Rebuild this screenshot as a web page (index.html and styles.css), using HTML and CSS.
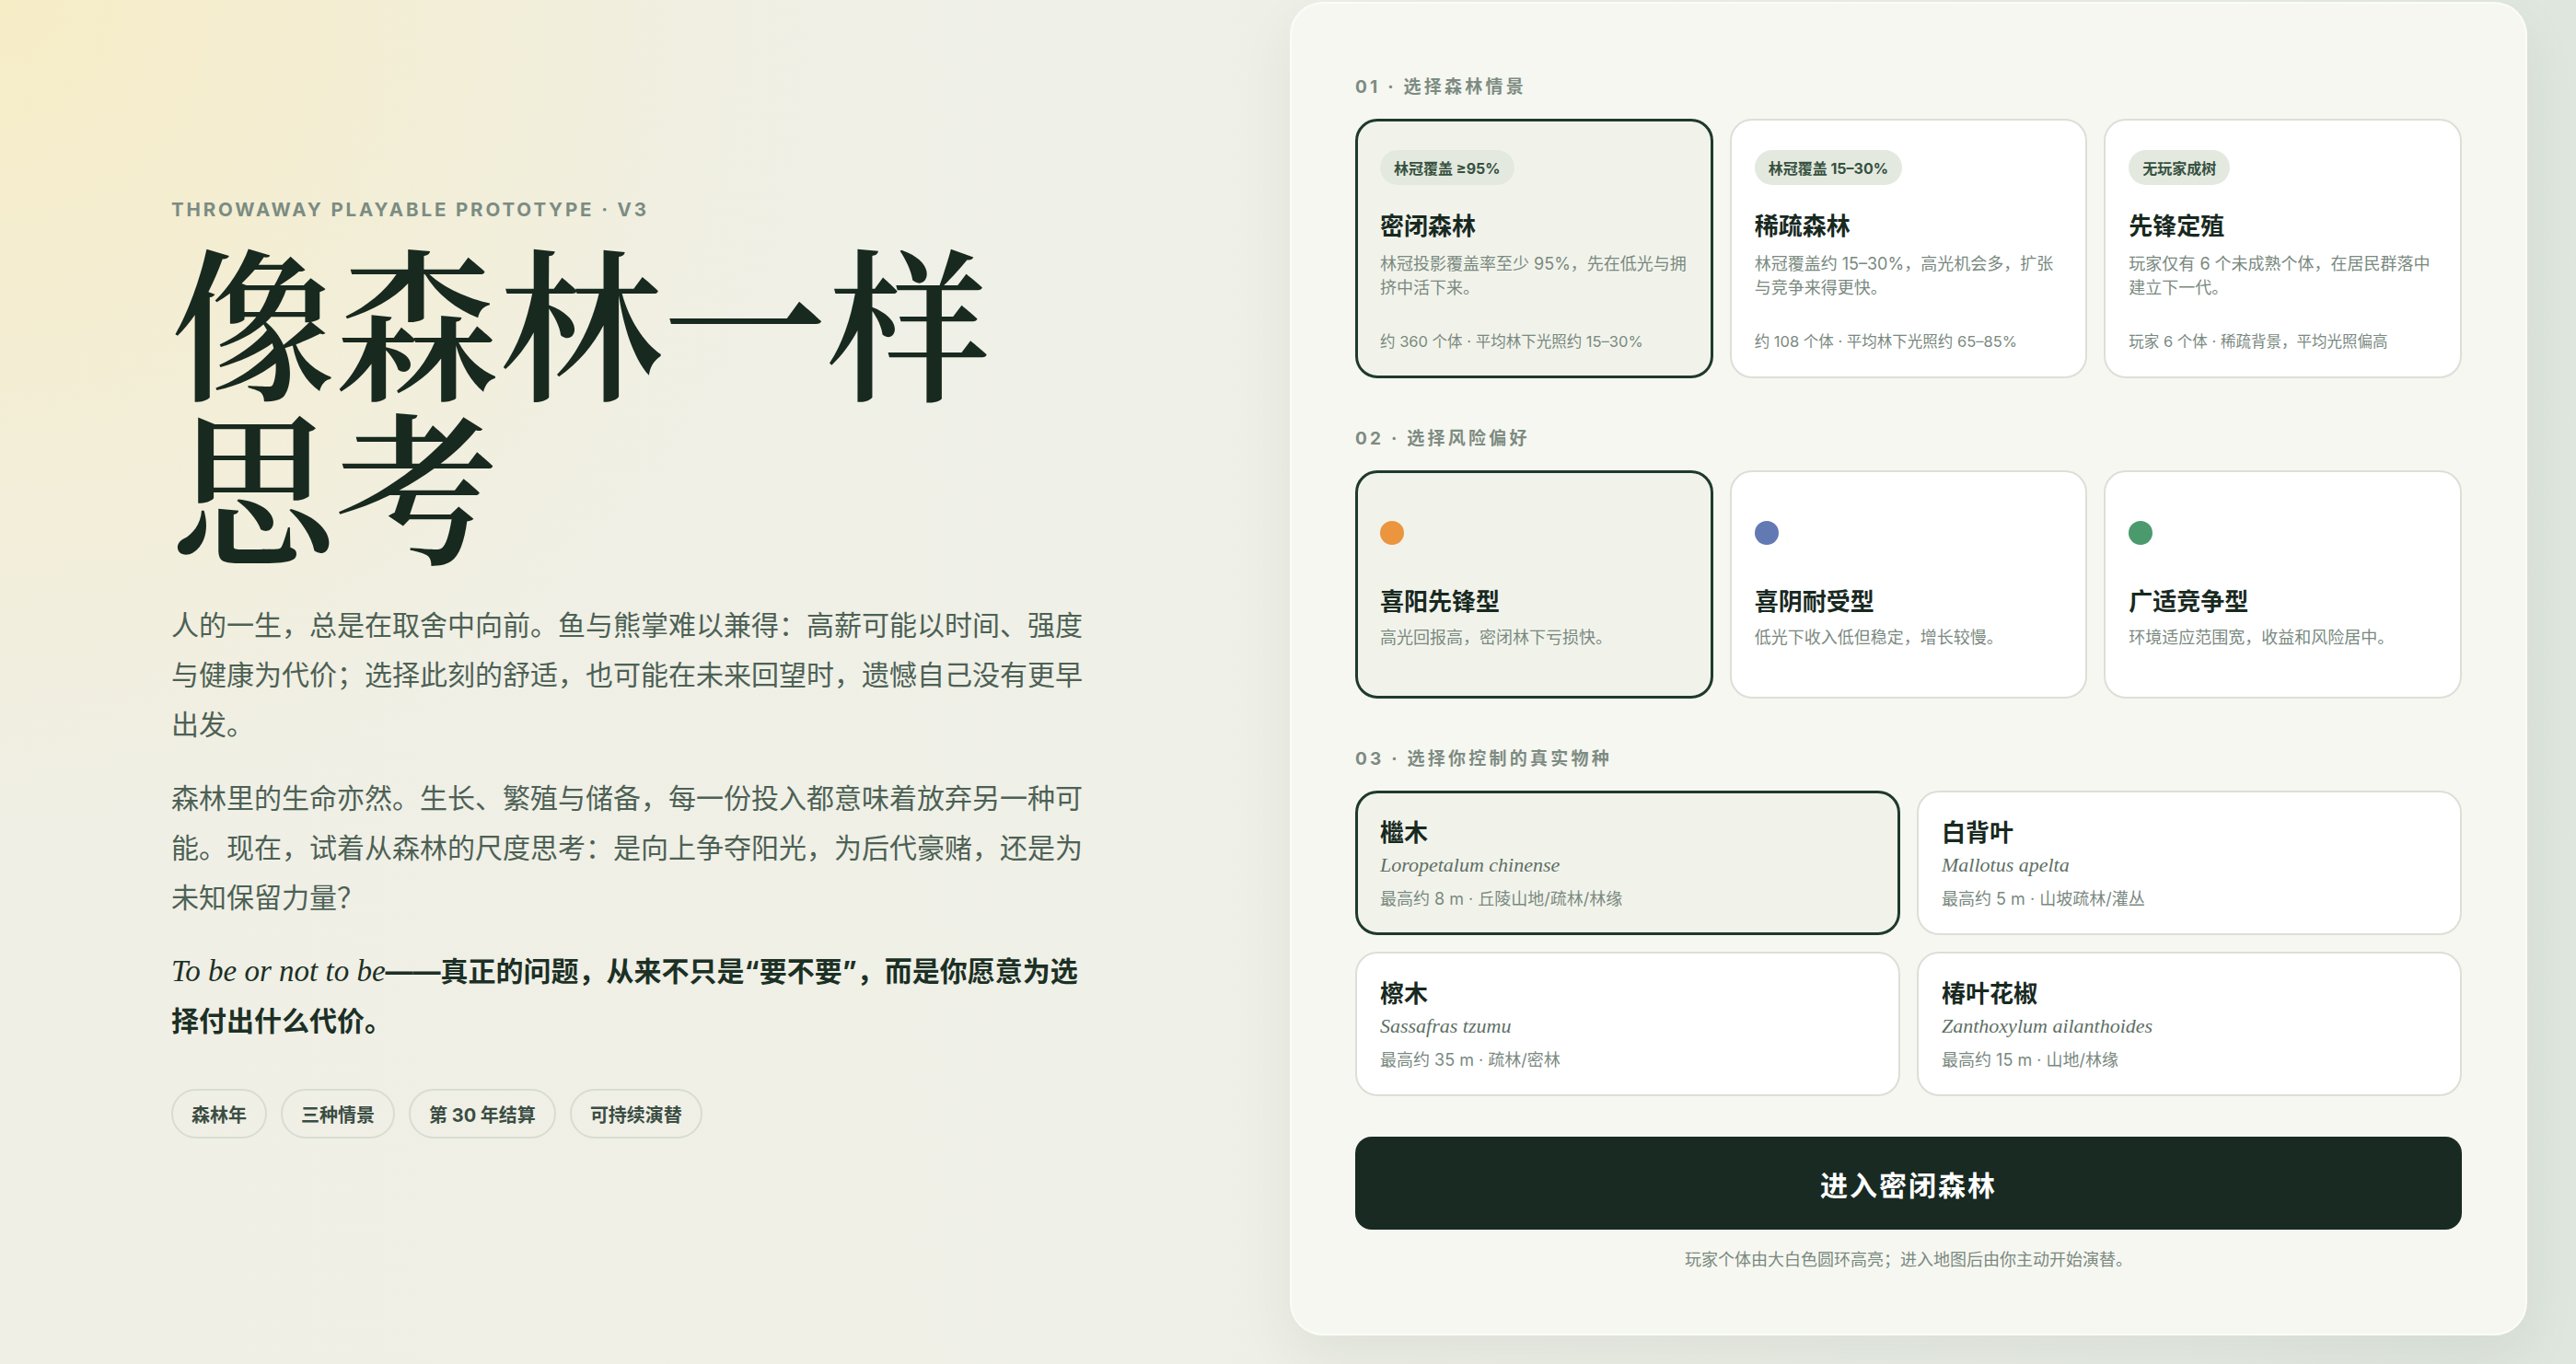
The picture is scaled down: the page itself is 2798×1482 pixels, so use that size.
FILE: index.html
```html
<!DOCTYPE html>
<html lang="zh-CN">
<head>
<meta charset="utf-8">
<title>像森林一样思考</title>
<link rel="stylesheet" href="styles.css">
</head>
<body>
<main class="page">
  <section class="intro">
    <div class="eyebrow">THROWAWAY PLAYABLE PROTOTYPE · V3</div>
    <h1 class="title">像森林一样<br>思考</h1>
    <p class="lead">人的一生，总是在取舍中向前。鱼与熊掌难以兼得：高薪可能以时间、强度与健康为代价；选择此刻的舒适，也可能在未来回望时，遗憾自己没有更早出发。</p>
    <p class="lead">森林里的生命亦然。生长、繁殖与储备，每一份投入都意味着放弃另一种可能。现在，试着从森林的尺度思考：是向上争夺阳光，为后代豪赌，还是为未知保留力量？</p>
    <p class="lead strong"><em>To be or not to be</em>——真正的问题，从来不只是“要不要”，而是你愿意为选择付出什么代价。</p>
    <div class="chips">
      <span class="chip">森林年</span>
      <span class="chip">三种情景</span>
      <span class="chip">第 30 年结算</span>
      <span class="chip">可持续演替</span>
    </div>
  </section>

  <section class="panel">
    <div class="step-label">01 · 选择森林情景</div>
    <div class="grid3">
      <div class="card scene selected">
        <span class="badge">林冠覆盖 ≥95%</span>
        <div class="card-title">密闭森林</div>
        <div class="card-desc">林冠投影覆盖率至少 95%，先在低光与拥挤中活下来。</div>
        <div class="card-foot">约 360 个体 · 平均林下光照约 15–30%</div>
      </div>
      <div class="card scene">
        <span class="badge">林冠覆盖 15–30%</span>
        <div class="card-title">稀疏森林</div>
        <div class="card-desc">林冠覆盖约 15–30%，高光机会多，扩张与竞争来得更快。</div>
        <div class="card-foot">约 108 个体 · 平均林下光照约 65–85%</div>
      </div>
      <div class="card scene">
        <span class="badge">无玩家成树</span>
        <div class="card-title">先锋定殖</div>
        <div class="card-desc">玩家仅有 6 个未成熟个体，在居民群落中建立下一代。</div>
        <div class="card-foot">玩家 6 个体 · 稀疏背景，平均光照偏高</div>
      </div>
    </div>

    <div class="step-label">02 · 选择风险偏好</div>
    <div class="grid3">
      <div class="card risk selected">
        <span class="dot dot-orange"></span>
        <div class="card-title">喜阳先锋型</div>
        <div class="card-desc">高光回报高，密闭林下亏损快。</div>
      </div>
      <div class="card risk">
        <span class="dot dot-blue"></span>
        <div class="card-title">喜阴耐受型</div>
        <div class="card-desc">低光下收入低但稳定，增长较慢。</div>
      </div>
      <div class="card risk">
        <span class="dot dot-green"></span>
        <div class="card-title">广适竞争型</div>
        <div class="card-desc">环境适应范围宽，收益和风险居中。</div>
      </div>
    </div>

    <div class="step-label">03 · 选择你控制的真实物种</div>
    <div class="grid2">
      <div class="card species selected">
        <div class="card-title">檵木</div>
        <div class="latin">Loropetalum chinense</div>
        <div class="card-meta">最高约 8 m · 丘陵山地/疏林/林缘</div>
      </div>
      <div class="card species">
        <div class="card-title">白背叶</div>
        <div class="latin">Mallotus apelta</div>
        <div class="card-meta">最高约 5 m · 山坡疏林/灌丛</div>
      </div>
      <div class="card species">
        <div class="card-title">檫木</div>
        <div class="latin">Sassafras tzumu</div>
        <div class="card-meta">最高约 35 m · 疏林/密林</div>
      </div>
      <div class="card species">
        <div class="card-title">椿叶花椒</div>
        <div class="latin">Zanthoxylum ailanthoides</div>
        <div class="card-meta">最高约 15 m · 山地/林缘</div>
      </div>
    </div>

    <button class="enter" type="button">进入密闭森林</button>
    <p class="note">玩家个体由大白色圆环高亮；进入地图后由你主动开始演替。</p>
  </section>
</main>
</body>
</html>
```

FILE: styles.css
```css
* { box-sizing: border-box; }

html, body {
  margin: 0;
  padding: 0;
}

body {
  min-height: 100vh;
  font-family: "Inter", "Noto Sans CJK SC", sans-serif;
  color: #18291f;
  background:
    radial-gradient(circle at 0 0, rgba(246, 236, 198, 1) 0, rgba(246, 236, 198, 0) 900px),
    linear-gradient(90deg, #f0efe5 0%, #eff0e7 45%, #e6ebe3 85%, #dee6dd 100%);
  overflow: hidden;
}

.page {
  display: grid;
  grid-template-columns: 1fr 1344px;
  column-gap: 223px;
  align-items: center;
  padding: 2px 53px 0 186px;
}

/* ---------- left intro ---------- */
.intro {
  display: flex;
  flex-direction: column;
}

.eyebrow {
  font-size: 20.5px;
  line-height: 24px;
  font-weight: 700;
  letter-spacing: 0.14em;
  color: #7b8c82;
}

.title {
  margin: 16px 0 0 0;
  font-family: "Noto Serif CJK SC", "Noto Sans CJK SC", serif;
  font-size: 178px;
  line-height: 178px;
  font-weight: 600;
  color: #18291f;
  letter-spacing: 0;
}

.lead {
  margin: 40px 0 0 0;
  font-size: 30px;
  line-height: 54px;
  color: #4d6155;
}

.lead + .lead {
  margin-top: 26px;
}

.lead.strong {
  font-weight: 700;
  color: #1c3025;
}

.lead.strong em {
  font-family: "Liberation Serif", "DejaVu Serif", serif;
  font-weight: 400;
  font-style: italic;
  font-size: 33px;
}

.chips {
  display: flex;
  gap: 15px;
  margin-top: 47px;
}

.chip {
  display: inline-flex;
  align-items: center;
  height: 54px;
  padding: 0 20px;
  border: 2px solid #d8dcd1;
  border-radius: 27px;
  font-size: 20px;
  font-weight: 700;
  color: #3b4d43;
}

/* ---------- right panel ---------- */
.panel {
  display: flex;
  flex-direction: column;
  background: #f6f7f1;
  border: 2px solid #fbfcf8;
  border-radius: 36px;
  padding: 79px 69px 67px 69px;
  box-shadow: 0 24px 60px rgba(40, 60, 48, 0.07);
}

.step-label {
  font-size: 19px;
  line-height: 24px;
  font-weight: 700;
  letter-spacing: 0.17em;
  color: #7d8b82;
  margin-bottom: 22px;
}

.grid3 {
  display: grid;
  grid-template-columns: repeat(3, 1fr);
  gap: 18px;
  margin-bottom: 54px;
}

.grid2 {
  display: grid;
  grid-template-columns: repeat(2, 1fr);
  gap: 18px;
}

.card {
  display: flex;
  flex-direction: column;
  align-items: flex-start;
  background: #ffffff;
  border: 2px solid #dcdfd6;
  border-radius: 24px;
}

.card.selected {
  background: #f1f3eb;
  border: 3px solid #1f3a2c;
}

.scene { padding: 32px 25px 26px 25px; }
.scene.selected { padding: 31px 24px 25px 24px; }

.risk { padding: 53px 25px 51px 25px; }
.risk.selected { padding: 52px 24px 50px 24px; }

.species { padding: 26px 25px 25px 25px; }
.species.selected { padding: 25px 24px 24px 24px; }

.badge {
  display: inline-flex;
  align-items: center;
  height: 38px;
  padding: 0 15px;
  border-radius: 19px;
  background: #e4e9df;
  color: #365140;
  font-size: 16px;
  font-weight: 700;
  margin-bottom: 27px;
}

.card-title {
  font-size: 26px;
  line-height: 36px;
  font-weight: 700;
  color: #18291f;
}

.card-desc {
  margin-top: 10px;
  font-size: 18px;
  line-height: 26px;
  color: #7a897f;
}

.risk .card-desc { margin-top: 8px; }

.card-foot {
  margin-top: auto;
  padding-top: 33px;
  font-size: 16.5px;
  line-height: 24px;
  color: #7a897f;
}

.dot {
  width: 26px;
  height: 26px;
  border-radius: 50%;
  margin-bottom: 44px;
}
.dot-orange { background: #eb953f; }
.dot-blue { background: #6379b4; }
.dot-green { background: #4b9a6e; }

.latin {
  margin-top: 2px;
  font-family: "Liberation Serif", "DejaVu Serif", serif;
  font-style: italic;
  font-size: 22px;
  line-height: 30px;
  color: #5e6f65;
}

.card-meta {
  margin-top: 10px;
  font-size: 18px;
  line-height: 24px;
  color: #7a897f;
}

.enter {
  margin-top: 44px;
  height: 101px;
  width: 100%;
  border: none;
  border-radius: 18px;
  background: #182a22;
  color: #ffffff;
  font-family: "Inter", "Noto Sans CJK SC", sans-serif;
  font-size: 30px;
  font-weight: 700;
  letter-spacing: 2px;
  cursor: pointer;
}

.note {
  margin: 20px 0 0 0;
  text-align: center;
  font-size: 18px;
  line-height: 26px;
  color: #7a897f;
}
```
